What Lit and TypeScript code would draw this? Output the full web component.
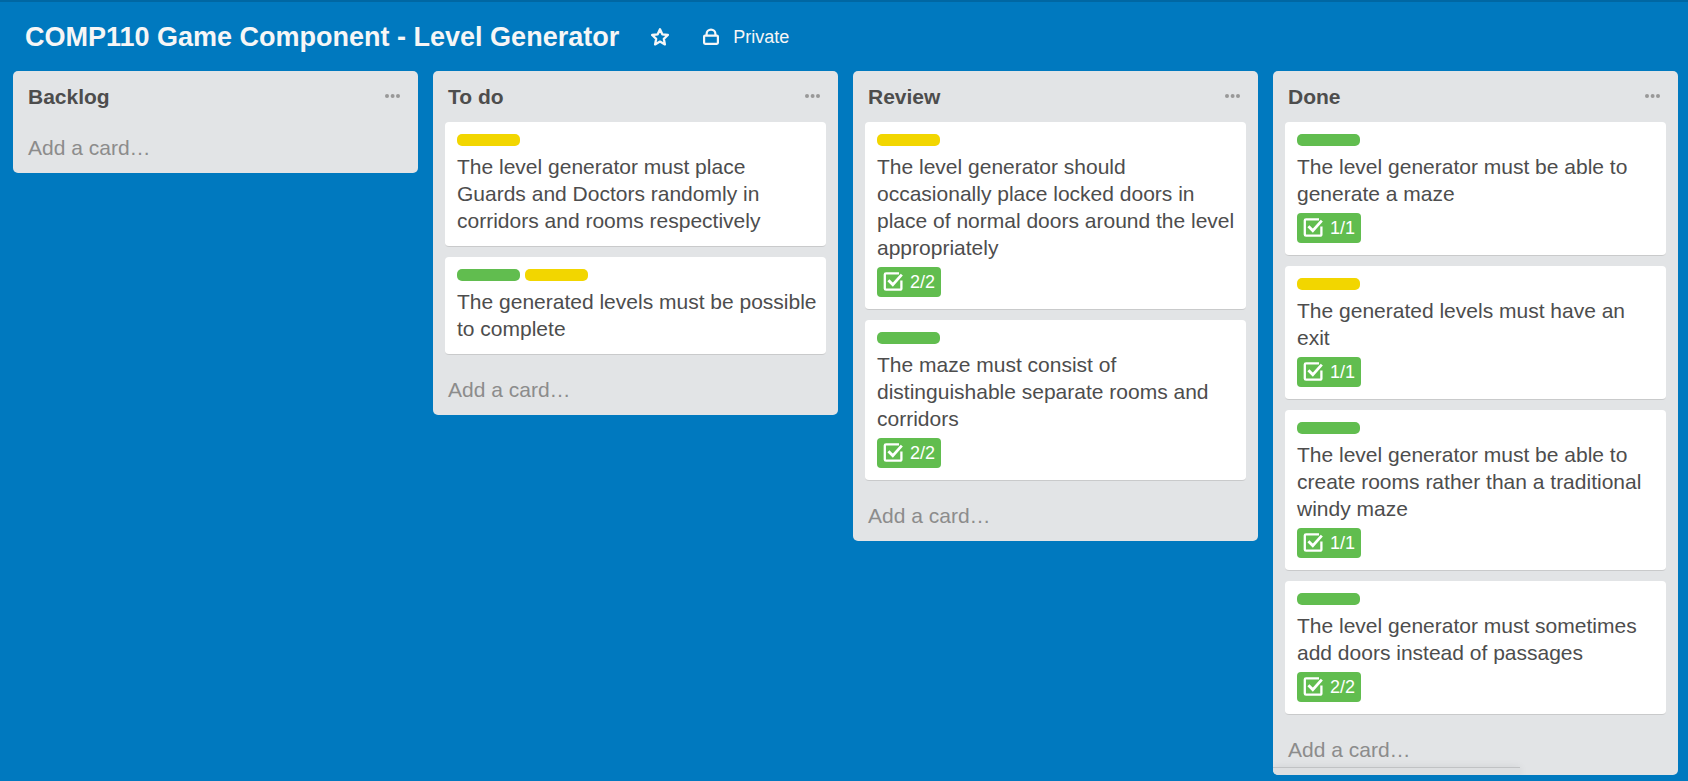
import { LitElement, html, css, svg, nothing } from "lit";
import { customElement, property } from "lit/decorators.js";

type LabelColor = "green" | "yellow";

interface Card {
  labels: LabelColor[];
  text: string;
  checklist?: string;
}

interface List {
  name: string;
  cards: Card[];
  statusBar?: boolean;
}

const LISTS: List[] = [
  { name: "Backlog", cards: [] },
  {
    name: "To do",
    cards: [
      {
        labels: ["yellow"],
        text: "The level generator must place Guards and Doctors randomly in corridors and rooms respectively",
      },
      {
        labels: ["green", "yellow"],
        text: "The generated levels must be possible to complete",
      },
    ],
  },
  {
    name: "Review",
    cards: [
      {
        labels: ["yellow"],
        text: "The level generator should occasionally place locked doors in place of normal doors around the level appropriately",
        checklist: "2/2",
      },
      {
        labels: ["green"],
        text: "The maze must consist of distinguishable separate rooms and corridors",
        checklist: "2/2",
      },
    ],
  },
  {
    name: "Done",
    statusBar: true,
    cards: [
      {
        labels: ["green"],
        text: "The level generator must be able to generate a maze",
        checklist: "1/1",
      },
      {
        labels: ["yellow"],
        text: "The generated levels must have an exit",
        checklist: "1/1",
      },
      {
        labels: ["green"],
        text: "The level generator must be able to create rooms rather than a traditional windy maze",
        checklist: "1/1",
      },
      {
        labels: ["green"],
        text: "The level generator must sometimes add doors instead of passages",
        checklist: "2/2",
      },
    ],
  },
];

const starIcon = svg`
  <path d="M9 1.2 L11.3 6.3 L16.9 7 L12.8 10.8 L13.9 16.4 L9 13.6 L4.1 16.4 L5.2 10.8 L1.1 7 L6.7 6.3 Z"
    fill="none" stroke="currentColor" stroke-width="2.3" stroke-linejoin="round" />`;

const lockIcon = svg`
  <rect x="3.1" y="7.6" width="13.8" height="8.2" rx="1" fill="none" stroke="currentColor" stroke-width="2.2" />
  <path d="M5.6 8 V6 A4.4 4.4 0 0 1 14.4 6 V8" fill="none" stroke="currentColor" stroke-width="2.2" />`;

const checkIcon = svg`
  <path d="M16 1.3 H3 A1.2 1.2 0 0 0 1.8 2.5 V16.5 A1.2 1.2 0 0 0 3 17.7 H17.2 A1.2 1.2 0 0 0 18.4 16.5 V8.5"
    fill="none" stroke="currentColor" stroke-width="2.3" />
  <path d="M5.4 8.2 L9.8 12.6 L18.8 2.6" fill="none" stroke="currentColor" stroke-width="2.8" />`;

@customElement("board-card")
class BoardCard extends LitElement {
  @property({ attribute: false }) card!: Card;

  static styles = css`
    :host {
      display: block;
      padding: 12px 9px 12px 12px;
      background: #fff;
      border-bottom: 1px solid #c9cacb;
      border-radius: 4px;
    }
    .labels {
      display: flex;
      gap: 5px;
      margin-bottom: 7px;
    }
    .label {
      width: 63px;
      height: 12px;
      border-radius: 5px;
    }
    .green {
      background: #61bd4f;
    }
    .yellow {
      background: #f2d600;
    }
    .text {
      margin: 0;
    }
    .badges {
      display: flex;
      margin-top: 6px;
    }
    .badge {
      display: flex;
      align-items: center;
      gap: 7px;
      height: 30px;
      padding: 0 6px;
      border-radius: 4px;
      background: #61bd4f;
      color: #fff;
      font-size: 18px;
      line-height: 30px;
    }
    .check {
      display: block;
      width: 20px;
      height: 20px;
    }
  `;

  render() {
    const { labels, text, checklist } = this.card;
    return html`
      <div class="labels">
        ${labels.map((color) => html`<span class="label ${color}"></span>`)}
      </div>
      <p class="text">${text}</p>
      ${checklist
        ? html`<div class="badges">
            <span class="badge">
              <svg class="check" viewBox="0 0 20 20" aria-hidden="true">${checkIcon}</svg>
              <span>${checklist}</span>
            </span>
          </div>`
        : nothing}
    `;
  }
}

@customElement("board-list")
class BoardList extends LitElement {
  @property({ attribute: false }) list!: List;

  static styles = css`
    :host {
      display: block;
      position: relative;
      overflow: hidden;
      padding: 0 12px;
      background: #e2e4e6;
      border-radius: 5px;
    }
    .head {
      display: flex;
      align-items: center;
      justify-content: space-between;
      height: 51px;
      padding: 0 3px;
    }
    .name {
      margin: 0;
      font-size: 21px;
      line-height: 27px;
      font-weight: 700;
    }
    button {
      border: 0;
      padding: 0;
      background: none;
      font: inherit;
      cursor: pointer;
    }
    .menu {
      display: flex;
      padding: 6px 3px;
      color: #999;
    }
    .dots {
      display: block;
      width: 15px;
      height: 5px;
    }
    .cards {
      display: grid;
      gap: 10px;
    }
    .cards:not(:empty) {
      margin-bottom: 9px;
    }
    .add {
      display: block;
      width: 100%;
      height: 51px;
      padding: 0 3px;
      color: #8c8c8c;
      text-align: left;
    }
    .status {
      position: absolute;
      left: 0;
      bottom: 0;
      width: 61%;
      height: 7px;
      border-top: 1px solid #c0c2c4;
      background: #dddfe1;
      box-shadow: 0 0 8px rgba(0, 0, 0, 0.08);
    }
  `;

  render() {
    const { name, cards, statusBar } = this.list;
    return html`
      <div class="head">
        <h2 class="name">${name}</h2>
        <button class="menu" aria-label="List actions">
          <svg class="dots" viewBox="0 0 15 5" aria-hidden="true" fill="currentColor">
            <circle cx="2" cy="2" r="2" />
            <circle cx="7.6" cy="2" r="2" />
            <circle cx="13" cy="2" r="2" />
          </svg>
        </button>
      </div>
      <div class="cards">${cards.map((card) => html`<board-card .card=${card}></board-card>`)}</div>
      <button class="add">Add a card…</button>
      ${statusBar ? html`<div class="status"></div>` : nothing}
    `;
  }
}

@customElement("app-root")
class AppRoot extends LitElement {
  static styles = css`
    :host {
      display: block;
      box-sizing: border-box;
      min-height: 100vh;
      border-top: 2px solid #0067a3;
      background: #0079bf;
      color: #4d4d4d;
      font-family: "Liberation Sans", Arial, sans-serif;
      font-size: 21px;
      line-height: 27px;
    }
    .bar {
      display: flex;
      align-items: center;
      height: 69px;
      padding: 0 25px;
      color: #f6f6f6;
    }
    .title {
      margin: 0 32px 0 0;
      font-size: 27px;
      line-height: 36px;
      font-weight: 700;
    }
    .action {
      display: flex;
      align-items: center;
      gap: 14px;
      margin-right: 32px;
      padding: 0;
      border: 0;
      background: none;
      color: inherit;
      font: inherit;
      font-size: 18px;
      line-height: 36px;
      cursor: pointer;
    }
    .icon {
      display: block;
      width: 18px;
      height: 18px;
    }
    .lists {
      display: grid;
      grid-template-columns: repeat(4, minmax(0, 1fr));
      gap: 15px;
      align-items: start;
      padding: 0 10px 0 13px;
    }
  `;

  render() {
    return html`
      <header class="bar">
        <h1 class="title">COMP110 Game Component - Level Generator</h1>
        <button class="action" aria-label="Star board">
          <svg class="icon" viewBox="0 0 18 18" aria-hidden="true">${starIcon}</svg>
        </button>
        <button class="action">
          <svg class="icon" viewBox="0 0 18 18" aria-hidden="true">${lockIcon}</svg>
          <span>Private</span>
        </button>
      </header>
      <main class="lists">
        ${LISTS.map((list) => html`<board-list .list=${list}></board-list>`)}
      </main>
    `;
  }
}
